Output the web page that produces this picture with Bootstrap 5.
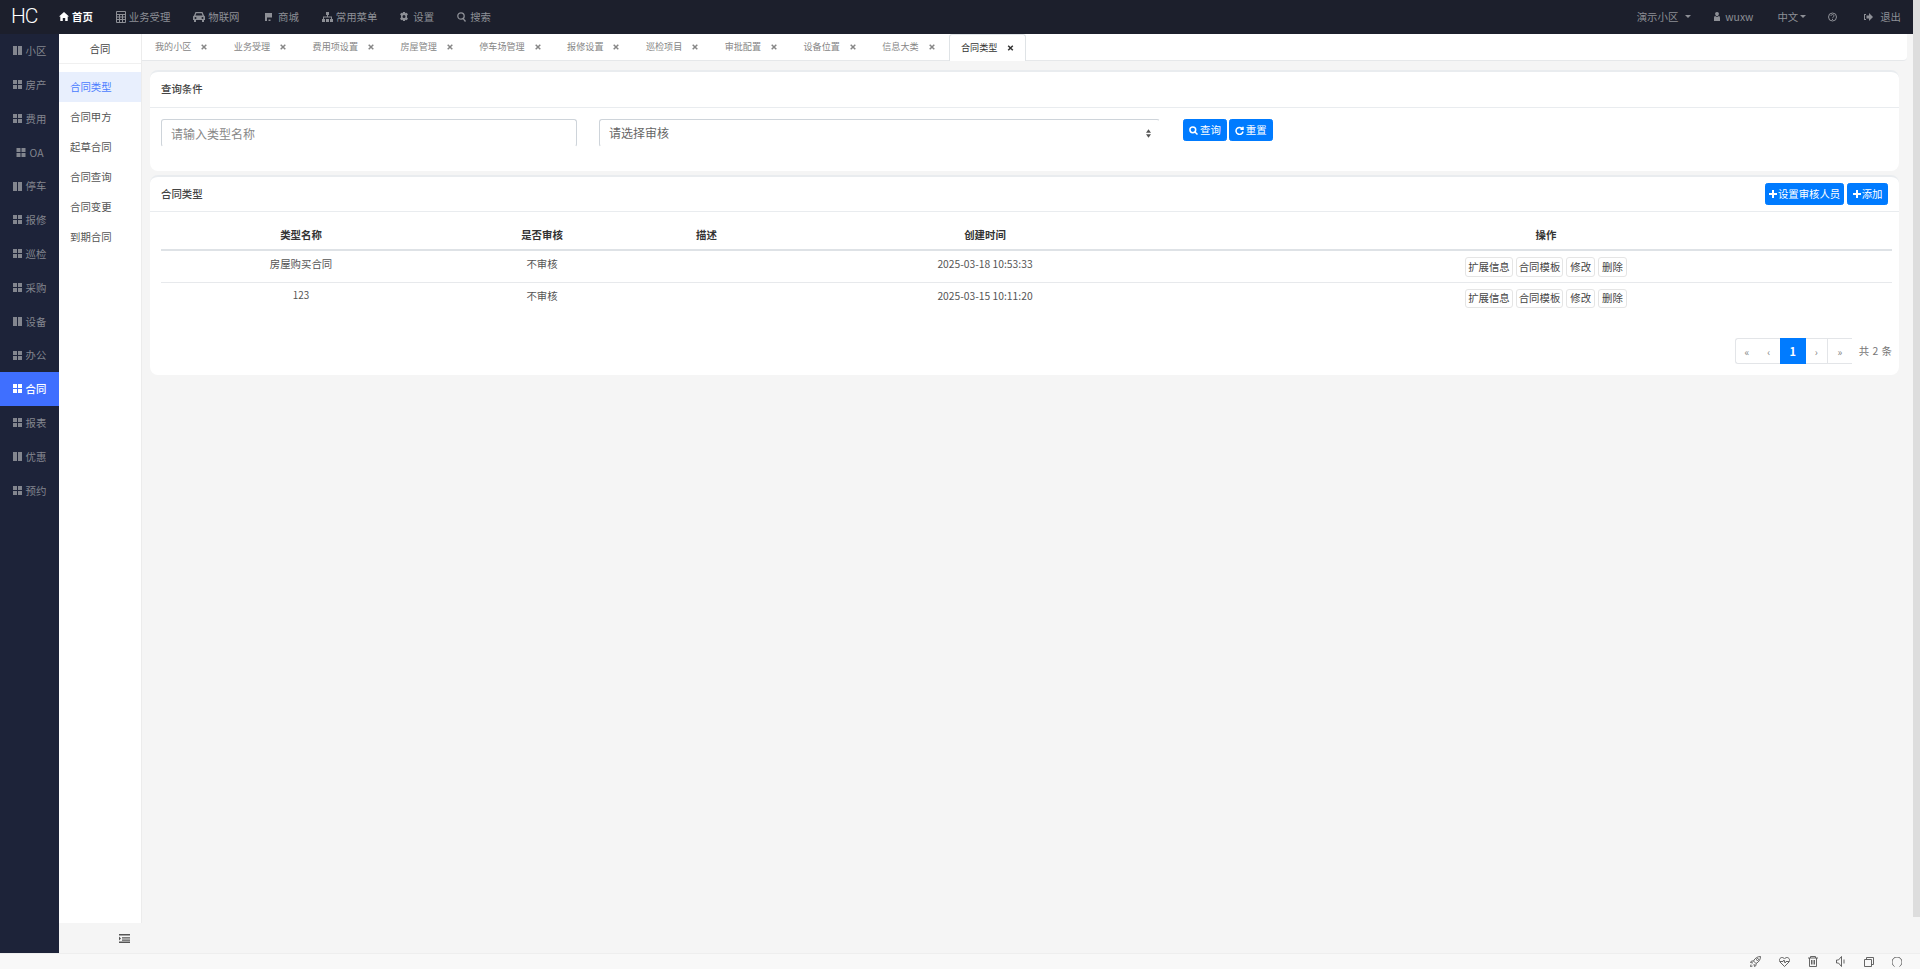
<!DOCTYPE html>
<html lang="zh-CN">
<head>
<meta charset="utf-8">
<title>合同类型</title>
<link href="https://cdn.jsdelivr.net/npm/bootstrap@5.3.0/dist/css/bootstrap.min.css" rel="stylesheet">
<style>
html,body{height:100%;overflow:hidden}
body{background:#f5f5f5;font-family:"Noto Sans CJK SC","Liberation Sans",sans-serif;font-size:10.4px;color:#555;line-height:1.3}
svg{display:block;flex:none}
.hc-shell{height:969px;overflow:hidden}
.hc-top{height:34px;background:#1c1f2c;color:#8d8f96;padding:0 19px 0 11px;flex:none}
.hc-brand{font-family:Roboto,"Liberation Sans",sans-serif;font-size:21px;font-weight:300;color:#fff;width:25px;margin-right:23px;letter-spacing:-1px;white-space:nowrap}
.hc-topnav{gap:23px}
.hc-topitem{gap:3px;color:#8d8f96;text-decoration:none;white-space:nowrap}
.hc-topitem.on{color:#fff;font-weight:700}
.hc-shop{gap:6px;margin-left:2.5px}
.hc-gear{gap:5px}
.hc-find{gap:4px}
.hc-caret{width:0;height:0;border:3px solid transparent;border-top:3.5px solid #8d8f96;border-bottom:0;margin-left:3px}
.hc-right{margin-left:auto;gap:24px}
.hc-mid{min-height:0}
.hc-rail{width:59px;background:#1d2339;flex:none}
.hc-railitem{height:33.8px;gap:4px;color:#83868f;text-decoration:none}
.hc-railitem.on{background:#3f6fff;color:#fff;font-weight:500}
.hc-sub{width:83px;flex:none}
.hc-subpanel{background:#fff;border-right:1px solid #ececec;flex:1 1 auto}
.hc-subtitle{height:30px;border-bottom:1px solid #f0f0f0;color:#444;margin-bottom:8px}
.hc-subitem{height:30px;padding-left:11px;color:#555;text-decoration:none}
.hc-subitem.on{background:#e8effd;color:#4a7cff}
.hc-subfoot{height:30px;padding-left:60px}
.hc-main{min-width:0}
.hc-tabs{height:27px;background:#fff;border-bottom:1px solid #e6e8ea;margin-right:13px;border-bottom-right-radius:4px;padding-left:6.5px;flex:none;color:#868686;font-size:9.1px}
.hc-tab{padding:0 19.9px 0 6.5px;gap:10px;white-space:nowrap}
.hc-tab.on{height:27px;width:77px;margin-left:-5.5px;color:#333;background:#fff;border:1px solid #dfe3e6;border-bottom:0;border-radius:3px 3px 0 0;padding:0 0 0 11px;margin-bottom:-1px}
.hc-cards{padding:8.5px 21px 0 8px;gap:4.5px}
.hc-card{background:#fff;border:0;border-top:2px solid #e9ecef;border-radius:8px}
.hc-cardhead{height:36px;border-bottom:1px solid #e9ecef;padding:0 11px;color:#444;font-weight:500}
.hc-cardhead.hc-short{height:35px}
.hc-cardbody{height:63px;padding:11.5px 11px 0;gap:22px}
.hc-input{height:28px;font-size:12px;padding:0 9px;color:#666;border:1px solid #ced4da;border-bottom-color:transparent;border-radius:3px;box-shadow:none;background-color:#fff}
.hc-input::placeholder{color:#888}
.hc-w1{width:416px;flex:none}
.hc-w2{width:561px;flex:none;background-image:url("data:image/svg+xml,%3Csvg xmlns='http://www.w3.org/2000/svg' viewBox='0 0 6 10'%3E%3Cpath d='M3 0 6 4H0zM3 10 0 6h6z' fill='%23555'/%3E%3C/svg%3E");background-size:5px 9px;background-position:right 8px center;border-right-color:transparent}
.hc-btn{height:22px;font-size:10.4px;padding:0 5px;gap:2px;background:#007bff;border:1px solid #007bff;border-radius:2.5px;color:#fff;line-height:1}
.hc-btn.hc-long{padding:0 3px;gap:1px}
.hc-btn.hc-add{padding:0 4.5px;gap:1px}
.hc-btnrow{gap:2px;margin-left:1px}
.hc-addrow{gap:3px}
.hc-tablewrap{padding:0 7px 0 11px}
.hc-table{table-layout:fixed;width:1731px;margin:0;color:#555}
.hc-table th{height:38px;padding:8px 0 0;text-align:center;vertical-align:middle;border-bottom:2px solid #dee2e6;color:#333;font-weight:700;background:transparent}
.hc-table td{height:32px;padding:6px 0 0;text-align:center;vertical-align:top;border-bottom:1px solid #e7e9ec;background:transparent;color:#555}
.hc-table tr:last-child td{border-bottom:0}
.hc-num{font-size:9.9px}
.hc-date{font-size:10.3px}
.hc-opbtns{gap:3px}
.hc-op{height:19.5px;padding:0 2px;font-size:10.4px;background:#fff;border:1px solid #e5e5e5;border-radius:3px;color:#444;line-height:1}
.hc-op.hc-twochar{padding:0 3px}
.hc-pagerow{padding:24px 7px 11px 0;gap:7px}
.hc-pager{margin:0}
.hc-pager .page-item .page-link{height:26px;padding:0;margin-left:0;display:flex;align-items:center;justify-content:center;font-size:10px;color:#888;border:0;border-top:1px solid #e3e5e8;border-bottom:1px solid #e3e5e8;border-radius:0;background:#fff}
.hc-pager .page-item.first .page-link{border-left:1px solid #e3e5e8;border-radius:3px 0 0 3px}
.hc-pager .page-item.sep .page-link{border-left:1px solid #e3e5e8}
.hc-pager .page-item.active .page-link{background:#007bff;border-color:#007bff;color:#fff;font-weight:700;font-size:11px}
.hc-pw1{width:23px}.hc-pw2{width:22px}.hc-pw3{width:26px}.hc-pw4{width:21px}.hc-pw5{width:25px}
.hc-total{color:#777;word-spacing:1px}
.hc-foot{height:16px;background:#f8f8f8;border-top:1px solid #eee;padding-right:18px;gap:18.3px;flex:none}
.hc-scroll{position:absolute;top:0;right:0;width:7px;height:917px;background:#ddd}
.hc-defs{position:absolute}
.hc-g4{gap:4px}.hc-g5{gap:5px;margin-left:-1px}.hc-g7{gap:7px;margin-left:3px}
.hc-q{margin-left:-2px}
.hc-c2{margin-left:2px}
</style>
</head>
<body>
<svg class="hc-defs" width="0" height="0">
<symbol id="g4" viewBox="0 0 9 9"><path fill="currentColor" d="M0 0h4v4H0zM5 0h4v4H5zM0 5h4v4H0zM5 5h4v4H5z"/></symbol>
<symbol id="g2" viewBox="0 0 9 9"><path fill="currentColor" d="M0 0h4v9H0zM5 0h4v9H5z"/></symbol>
<symbol id="x" viewBox="0 0 6 6"><path d="M.7.700l4.600 4.600M5.300.700.7 5.300" stroke="currentColor" stroke-width="1.500"/></symbol>
</svg>
<div class="hc-shell d-flex flex-column position-relative">
  <nav class="hc-top d-flex align-items-center">
    <div class="hc-brand">HC</div>
    <div class="hc-topnav d-flex align-items-center">
      <a class="hc-topitem on d-flex align-items-center" href="#"><svg width="10" height="9" viewBox="0 0 10 9"><path fill="currentColor" d="M5 0 0 4.500h1.300V9h2.500V6h2.400v3h2.500V4.500H10z"/></svg>首页</a>
      <a class="hc-topitem d-flex align-items-center" href="#"><svg width="10" height="12" viewBox="0 0 10 12" fill="none" stroke="currentColor"><path d="M.5.500h9v11h-9zM.5 3.500h9M.5 6h9M.5 8.500h9M3.500 3.500v8M6.500 3.500v8"/></svg>业务受理</a>
      <a class="hc-topitem d-flex align-items-center" href="#"><svg width="12" height="10" viewBox="0 0 12 10"><path fill="currentColor" d="M2.500 0h7L11 3.500l1 1V8h-1v2H9V8H3v2H1V8H0V4.500l1-1zM3.300 1.200 2.500 3.500h7l-.8-2.300zM2.500 5a1 1 0 1 0 0 2 1 1 0 0 0 0-2zm7 0a1 1 0 1 0 0 2 1 1 0 0 0 0-2z"/></svg>物联网</a>
      <a class="hc-topitem hc-shop d-flex align-items-center" href="#"><svg width="7" height="8" viewBox="0 0 7 8"><path fill="currentColor" d="M0 0h7v4.500H2V8H0zM3.500 6.500h2V8h-2z"/></svg>商城</a>
      <a class="hc-topitem d-flex align-items-center" href="#"><svg width="11" height="10" viewBox="0 0 11 10"><path fill="currentColor" d="M4 0h3v3H6v1.500h4V7h1v3H8V7h1V5.500H2V7h1v3H0V7h1V4.500h4V3H4zM4 7h3v3H4z"/></svg>常用菜单</a>
      <a class="hc-topitem hc-gear d-flex align-items-center" href="#"><svg width="8" height="9" viewBox="0 0 8 9"><path fill-rule="evenodd" fill="currentColor" d="M3 0h2l.3 1.300 1.200-.6L8 2.300 7 3.400V5.600l1 1.100-1.500 1.600-1.200-.6L5 9H3l-.3-1.300-1.200.6L0 6.700l1-1.100V3.400L0 2.300 1.500.7l1.200.6zM4 3a1.500 1.500 0 1 0 0 3 1.500 1.500 0 0 0 0-3z"/></svg>设置</a>
      <a class="hc-topitem hc-find d-flex align-items-center" href="#"><svg width="9" height="10" viewBox="0 0 9 10" fill="none" stroke="currentColor" stroke-width="1.300"><circle cx="4" cy="4" r="3.200"/><path d="M6.200 6.600 8.500 9.500"/></svg>搜索</a>
    </div>
    <div class="hc-right d-flex align-items-center">
      <span class="hc-g4 d-flex align-items-center">演示小区<i class="hc-caret"></i></span>
      <span class="hc-g5 d-flex align-items-center"><svg width="6" height="9" viewBox="0 0 6 9"><path fill="currentColor" d="M3 0a1.800 1.800 0 0 1 1.800 2.200C4.700 3.200 4 4 3 4S1.300 3.200 1.200 2.200A1.800 1.800 0 0 1 3 0zM1 4l2 1 2-1c.7.300 1 1 1 2.200V9H0V6.200C0 5 .3 4.300 1 4z"/></svg>wuxw</span>
      <span class="d-flex align-items-center">中文<i class="hc-caret hc-c2"></i></span>
      <svg class="hc-q" width="9" height="10" viewBox="0 0 9 10" fill="none" stroke="currentColor"><circle cx="4.500" cy="5" r="4"/><path d="M3 4c0-2 3-2 3 0 0 1-1.500 1-1.500 2.200M4.500 7v1"/></svg>
      <span class="hc-g7 d-flex align-items-center"><svg width="9" height="8" viewBox="0 0 9 8"><path fill="currentColor" d="M5 0l4 4-4 4V5.500H2.500v-3H5zM0 1h2v1H1v4h1v1H0z"/></svg>退出</span>
    </div>
  </nav>
  <div class="hc-mid d-flex flex-grow-1">
    <aside class="hc-rail">
      <a class="hc-railitem d-flex align-items-center justify-content-center" href="#"><svg width="9" height="9"><use href="#g2"/></svg>小区</a>
      <a class="hc-railitem d-flex align-items-center justify-content-center" href="#"><svg width="9" height="9"><use href="#g4"/></svg>房产</a>
      <a class="hc-railitem d-flex align-items-center justify-content-center" href="#"><svg width="9" height="9"><use href="#g4"/></svg>费用</a>
      <a class="hc-railitem d-flex align-items-center justify-content-center" href="#"><svg width="10" height="9"><use href="#g4"/></svg>OA</a>
      <a class="hc-railitem d-flex align-items-center justify-content-center" href="#"><svg width="9" height="9"><use href="#g2"/></svg>停车</a>
      <a class="hc-railitem d-flex align-items-center justify-content-center" href="#"><svg width="9" height="9"><use href="#g4"/></svg>报修</a>
      <a class="hc-railitem d-flex align-items-center justify-content-center" href="#"><svg width="9" height="9"><use href="#g4"/></svg>巡检</a>
      <a class="hc-railitem d-flex align-items-center justify-content-center" href="#"><svg width="9" height="9"><use href="#g4"/></svg>采购</a>
      <a class="hc-railitem d-flex align-items-center justify-content-center" href="#"><svg width="9" height="9"><use href="#g2"/></svg>设备</a>
      <a class="hc-railitem d-flex align-items-center justify-content-center" href="#"><svg width="9" height="9"><use href="#g4"/></svg>办公</a>
      <a class="hc-railitem on d-flex align-items-center justify-content-center" href="#"><svg width="9" height="9"><use href="#g4"/></svg>合同</a>
      <a class="hc-railitem d-flex align-items-center justify-content-center" href="#"><svg width="9" height="9"><use href="#g4"/></svg>报表</a>
      <a class="hc-railitem d-flex align-items-center justify-content-center" href="#"><svg width="9" height="9"><use href="#g2"/></svg>优惠</a>
      <a class="hc-railitem d-flex align-items-center justify-content-center" href="#"><svg width="9" height="9"><use href="#g4"/></svg>预约</a>
    </aside>
    <aside class="hc-sub d-flex flex-column">
      <div class="hc-subpanel">
        <div class="hc-subtitle d-flex align-items-center justify-content-center">合同</div>
        <a class="hc-subitem on d-flex align-items-center" href="#">合同类型</a>
        <a class="hc-subitem d-flex align-items-center" href="#">合同甲方</a>
        <a class="hc-subitem d-flex align-items-center" href="#">起草合同</a>
        <a class="hc-subitem d-flex align-items-center" href="#">合同查询</a>
        <a class="hc-subitem d-flex align-items-center" href="#">合同变更</a>
        <a class="hc-subitem d-flex align-items-center" href="#">到期合同</a>
      </div>
      <div class="hc-subfoot d-flex align-items-center">
        <svg width="11" height="9" viewBox="0 0 11 9"><path fill="#555" d="M0 0h11v1.500H0zM3 3.200h8v1.300H3zM3 5.500h8v1.300H3zM0 7.600h11V9H0zM0 2.500l2 2-2 2z"/></svg>
      </div>
    </aside>
    <main class="hc-main flex-grow-1 d-flex flex-column">
      <div class="hc-tabs d-flex align-items-center">
        <div class="hc-tab d-flex align-items-center">我的小区<svg width="6" height="6"><use href="#x"/></svg></div>
        <div class="hc-tab d-flex align-items-center">业务受理<svg width="6" height="6"><use href="#x"/></svg></div>
        <div class="hc-tab d-flex align-items-center">费用项设置<svg width="6" height="6"><use href="#x"/></svg></div>
        <div class="hc-tab d-flex align-items-center">房屋管理<svg width="6" height="6"><use href="#x"/></svg></div>
        <div class="hc-tab d-flex align-items-center">停车场管理<svg width="6" height="6"><use href="#x"/></svg></div>
        <div class="hc-tab d-flex align-items-center">报修设置<svg width="6" height="6"><use href="#x"/></svg></div>
        <div class="hc-tab d-flex align-items-center">巡检项目<svg width="6" height="6"><use href="#x"/></svg></div>
        <div class="hc-tab d-flex align-items-center">审批配置<svg width="6" height="6"><use href="#x"/></svg></div>
        <div class="hc-tab d-flex align-items-center">设备位置<svg width="6" height="6"><use href="#x"/></svg></div>
        <div class="hc-tab d-flex align-items-center">信息大类<svg width="6" height="6"><use href="#x"/></svg></div>
        <div class="hc-tab on d-flex align-items-center">合同类型<svg width="7" height="6"><use href="#x"/></svg></div>
      </div>
      <div class="hc-cards d-flex flex-column">
        <section class="card hc-card">
          <div class="hc-cardhead d-flex align-items-center">查询条件</div>
          <div class="hc-cardbody d-flex align-items-start">
            <input class="form-control hc-input hc-w1" placeholder="请输入类型名称">
            <select class="form-select hc-input hc-w2"><option>请选择审核</option></select>
            <div class="hc-btnrow d-flex">
              <button class="btn hc-btn d-flex align-items-center" type="button"><svg width="9" height="9" viewBox="0 0 9 9" fill="none" stroke="#fff" stroke-width="1.500"><circle cx="3.800" cy="3.800" r="2.900"/><path d="M6 6l2.500 2.500"/></svg>查询</button>
              <button class="btn hc-btn d-flex align-items-center" type="button"><svg width="9" height="9" viewBox="0 0 9 9" fill="none" stroke="#fff" stroke-width="1.500"><path d="M7.500 3A3.500 3.500 0 1 0 8 5.500M8 .8V3.300H5.500"/></svg>重置</button>
            </div>
          </div>
        </section>
        <section class="card hc-card">
          <div class="hc-cardhead hc-short d-flex align-items-center justify-content-between">
            <span>合同类型</span>
            <div class="hc-addrow d-flex">
              <button class="btn hc-btn hc-long d-flex align-items-center" type="button"><svg width="8" height="8" viewBox="0 0 8 8"><path fill="#fff" d="M3 0h2v3h3v2H5v3H3V5H0V3h3z"/></svg>设置审核人员</button>
              <button class="btn hc-btn hc-add d-flex align-items-center" type="button"><svg width="8" height="8" viewBox="0 0 8 8"><path fill="#fff" d="M3 0h2v3h3v2H5v3H3V5H0V3h3z"/></svg>添加</button>
            </div>
          </div>
          <div class="hc-tablewrap">
            <table class="table hc-table">
              <colgroup><col style="width:280px"><col style="width:202px"><col style="width:127px"><col style="width:430px"><col style="width:692px"></colgroup>
              <thead><tr><th>类型名称</th><th>是否审核</th><th>描述</th><th>创建时间</th><th>操作</th></tr></thead>
              <tbody>
                <tr><td>房屋购买合同</td><td>不审核</td><td></td><td class="hc-date">2025-03-18 10:53:33</td>
                  <td><div class="hc-opbtns d-flex justify-content-center"><button class="btn hc-op" type="button">扩展信息</button><button class="btn hc-op" type="button">合同模板</button><button class="btn hc-op hc-twochar" type="button">修改</button><button class="btn hc-op hc-twochar" type="button">删除</button></div></td></tr>
                <tr><td class="hc-num">123</td><td>不审核</td><td></td><td class="hc-date">2025-03-15 10:11:20</td>
                  <td><div class="hc-opbtns d-flex justify-content-center"><button class="btn hc-op" type="button">扩展信息</button><button class="btn hc-op" type="button">合同模板</button><button class="btn hc-op hc-twochar" type="button">修改</button><button class="btn hc-op hc-twochar" type="button">删除</button></div></td></tr>
              </tbody>
            </table>
          </div>
          <div class="hc-pagerow d-flex justify-content-end align-items-center">
            <ul class="pagination hc-pager">
              <li class="page-item first"><a class="page-link hc-pw1" href="#">«</a></li>
              <li class="page-item"><a class="page-link hc-pw2" href="#">‹</a></li>
              <li class="page-item active"><a class="page-link hc-pw3" href="#">1</a></li>
              <li class="page-item"><a class="page-link hc-pw4" href="#">›</a></li>
              <li class="page-item sep"><a class="page-link hc-pw5" href="#">»</a></li>
            </ul>
            <span class="hc-total">共 2 条</span>
          </div>
        </section>
      </div>
    </main>
  </div>
  <footer class="hc-foot d-flex align-items-center justify-content-end">
    <svg width="11" height="11" viewBox="0 0 11 11" fill="none" stroke="#555" stroke-width=".9"><path d="M10.500.500C7.500.500 5 2 3.500 5l2.500 2.500C9 6 10.500 3.500 10.500.500zM3.500 5H1.500L.5 6.500 3 7M6 7.500v2L4.500 10.500 4 8M1 8.500l-.5 2 2-.5"/><circle cx="7.500" cy="3.500" r="1"/></svg>
    <svg width="11" height="10" viewBox="0 0 11 10" fill="none" stroke="#555" stroke-width=".9"><path d="M5.500 9.500 1 5C-.5 3 1 .5 3 .5c1.200 0 2 .7 2.500 1.500C6 1.200 6.800.5 8 .5c2 0 3.500 2.500 2 4.500zM1 4.500h3l1-1.500 1 3 1-1.500h3"/></svg>
    <svg width="10" height="11" viewBox="0 0 10 11" fill="none" stroke="#555" stroke-width=".9"><path d="M0 2h10M2.500 2V.5h5V2M1.500 2v8.500h7V2M3.500 4v4.500M5 4v4.500M6.500 4v4.500"/></svg>
    <svg width="9" height="11" viewBox="0 0 9 11" fill="none" stroke="#555" stroke-width=".9"><path d="M.5 4v3h2l3 3.500V.500l-3 3.500zM8 3.500v4"/></svg>
    <svg width="10" height="10" viewBox="0 0 10 10" fill="none" stroke="#555" stroke-width=".9"><path d="M.5 2.500h7v7h-7zM2.500 2.500v-2h7v7h-2"/></svg>
    <svg width="10" height="10" viewBox="0 0 10 10" fill="none" stroke="#555" stroke-width=".9"><path d="M2.500 9.500C.5 8 0 6.500 0 5a5 5 0 0 1 10 0c0 1.500-.5 3-2.500 4.500"/></svg>
  </footer>
  <div class="hc-scroll"></div>
</div>
<script src="https://cdn.jsdelivr.net/npm/bootstrap@5.3.0/dist/js/bootstrap.bundle.min.js"></script>
</body>
</html>
